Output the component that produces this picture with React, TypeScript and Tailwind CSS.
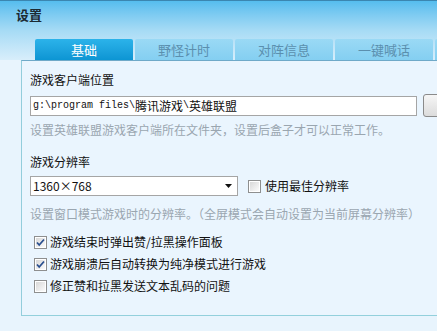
import React from 'react';

const cjk = "font-['Noto_Sans_CJK_SC',sans-serif]";

function Box({ checked }: { checked?: boolean }) {
  return <svg width="13" height="13" viewBox="0 0 13 13" className="shrink-0">
      <defs>
        <linearGradient id="cbg" x1="0" y1="0" x2="1" y2="1">
          <stop offset="0" stopColor="#d8d8d8" />
          <stop offset="1" stopColor="#fbfbfb" />
        </linearGradient>
      </defs>
      <rect x="0.5" y="0.5" width="12" height="12" fill="#fff" stroke="#8e8f8f" />
      <rect x="2" y="2" width="9" height="9" fill="url(#cbg)" />
      {checked && <path d="M3 6.5 L5.2 9 L10 3.5" fill="none" stroke="#2a4f8f" strokeWidth="1.8" />}
    </svg>;
}

function Check({ checked, label }: { checked?: boolean; label: string }) {
  return <div className="flex h-[16px] items-center gap-[3px] pl-[4px]">
      <Box checked={checked} />
      <span className="text-[12px] leading-[16px] text-[#111]">{label}</span>
    </div>;
}

export default function App() {
  const tabs = ['基础', '野怪计时', '对阵信息', '一键喊话', ''];
  return <div className={`relative h-[331px] w-[437px] overflow-hidden bg-[#e8f4fd] ${cjk}`}>
      <div className="bg-gradient-to-b from-[#55bdee] via-[#a6dbf5] to-[#d8eefb] border-t border-[#3b86b0]">
        <div className="h-[38px] pl-[16px] pt-[6px] text-[13px] font-bold leading-[16px] text-[#1c2a33]">
          设置
        </div>
        <div className="flex h-[21px] gap-[2px] pl-[35px]">
          {tabs.map((t, i) => <div key={i} className={i === 0 ? 'flex w-[98px] shrink-0 items-center justify-center rounded-t-[2px] bg-gradient-to-b from-[#2bb3ea] to-[#0c95d3] text-[13px] text-white' : 'flex w-[98px] shrink-0 items-center justify-center rounded-t-[2px] bg-gradient-to-b from-[#9ad9f5] to-[#84cff1] text-[13px] text-[#5b8fae]'}>
              {t}
            </div>)}
        </div>
      </div>
      <div className="ml-[21px] h-[256px] w-[440px] border-b border-l border-t border-b-[#93d0dc] border-l-[#93cddc] border-t-[#6fa9c8] bg-[#eaf5fe] pl-[8px]">
        <div className="mt-[11px] text-[12px] leading-[16px] text-[#111]">游戏客户端位置</div>
        <div className="mt-[6px] flex items-center">
          <div className="flex h-[20px] w-[387px] items-center border border-[#a5a5a5] bg-white pl-[2px] text-[#111]">
            <span className="font-['Liberation_Mono',monospace] text-[10px]">g:\program files\</span>
            <span className="text-[12px]">腾讯游戏</span>
            <span className="font-['Liberation_Mono',monospace] text-[10px]">\</span>
            <span className="text-[12px]">英雄联盟</span>
          </div>
          <div className="ml-[6px] h-[23px] w-[30px] rounded-[3px] border border-[#8a8a8a] bg-gradient-to-b from-[#f6f6f6] to-[#dcdcdc]" />
        </div>
        <div className="mt-[5px] text-[12px] leading-[16px] text-[#9aa6b0]">
          设置英雄联盟游戏客户端所在文件夹，设置后盒子才可以正常工作。
        </div>
        <div className="mt-[16px] text-[12px] leading-[16px] text-[#111]">游戏分辨率</div>
        <div className="mt-[6px] flex items-center">
          <div className="flex h-[20px] w-[208px] items-center justify-between border border-[#a5a5a5] bg-white pl-[2px] pr-[4px]">
            <span className="text-[12px] leading-[16px] text-[#111]">1360×768</span>
            <svg width="8" height="4" viewBox="0 0 8 4"><path d="M0 0 H7 L3.5 4 Z" fill="#111" /></svg>
          </div>
          <div className="ml-[10px] flex items-center gap-[4px]">
            <Box />
            <span className="text-[12px] leading-[16px] text-[#111]">使用最佳分辨率</span>
          </div>
        </div>
        <div className="mt-[10px] text-[12px] leading-[16px] text-[#9aa6b0]">
          设置窗口模式游戏时的分辨率。（全屏模式会自动设置为当前屏幕分辨率）
        </div>
        <div className="mt-[12px] flex flex-col gap-[6px]">
          <Check checked label="游戏结束时弹出赞/拉黑操作面板" />
          <Check checked label="游戏崩溃后自动转换为纯净模式进行游戏" />
          <Check label="修正赞和拉黑发送文本乱码的问题" />
        </div>
      </div>
    </div>;
}
